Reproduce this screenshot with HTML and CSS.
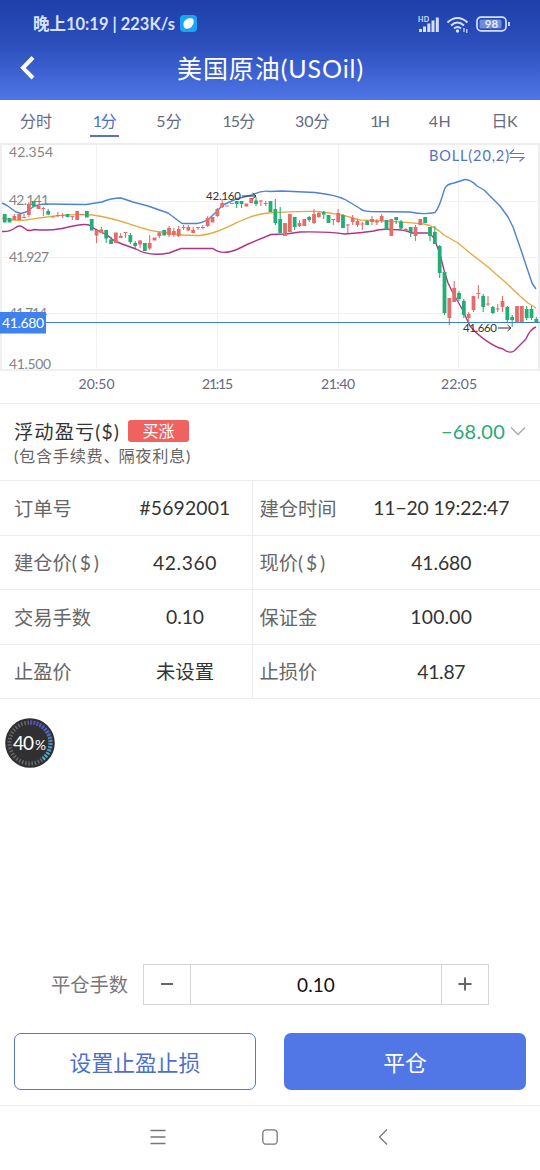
FILE: index.html
```html
<!DOCTYPE html>
<html lang="zh-CN">
<head>
<meta charset="utf-8">
<title>美国原油(USOil)</title>
<link rel="stylesheet" href="styles.css">
</head>
<body>
<div class="screen">
  <header class="header">
    <div class="status">
      <span class="status-text"><span class="fit" data-w="142">晚上10:19 | 223K/s</span></span>
      <svg class="app-badge" width="17" height="17" viewBox="0 0 17 17"><rect width="17" height="17" rx="4" fill="#18a5f4"/><path d="M3.500 9.500C3.500 5.500 7 3 11 3.300C14 3.500 14 6 13.500 8C12.500 11.500 10.500 13.700 7 13.700C4.500 13.700 3.500 12 3.500 9.500Z" fill="#fff"/></svg>
      <svg class="status-icons" width="94" height="22" viewBox="0 0 94 22">
        <text x="0" y="8.500" class="hd" textLength="11">HD</text>
        <g fill="#d6e0fa" transform="translate(0 -1)"><rect x="1" y="17" width="3" height="3"/><rect x="5" y="14.500" width="3" height="5.500"/><rect x="9.300" y="11.500" width="3" height="8.500"/><rect x="13.500" y="8.500" width="3" height="11.500"/><rect x="17.800" y="5.500" width="3" height="14.500"/></g>
        <g transform="translate(0 -1)"><g fill="none" stroke="#d6e0fa" stroke-width="2"><path d="M29.500 10.500Q39.500 1.500 49.500 10.500"/><path d="M33 13.500Q39.500 7.500 46 13.500"/><path d="M36 16.500Q39.500 13.500 43 16.500"/></g>
        <circle cx="39.500" cy="19" r="1.700" fill="#d6e0fa"/>
        <path d="M46 16v4M48.800 17v4" stroke="#d6e0fa" stroke-width="1.200"/></g>
        <g transform="translate(0 -1.500)"><rect x="59" y="5.700" width="29" height="13.600" rx="4" fill="none" stroke="#d6e0fa" stroke-width="1.700"/>
        <rect x="61.500" y="8" width="22" height="9" rx="1.500" fill="#6f8cda"/>
        <path d="M91 10.500v4" stroke="#d6e0fa" stroke-width="1.800"/>
        <text x="73.500" y="16.600" text-anchor="middle" class="battery">98</text></g>
      </svg>
    </div>
    <div class="titlebar">
      <svg class="back" width="18" height="28" viewBox="0 0 18 28"><path d="M14 3.500L4 13.800L14 24" fill="none" stroke="#fff" stroke-width="4"/></svg>
      <h1><span class="fit" data-w="187">美国原油(USOil)</span></h1>
    </div>
  </header>
  <nav class="tabs">
    <span class="tab">分时</span><span class="tab active"><span class="fit" data-w="23">1分</span></span><span class="tab"><span class="fit" data-w="25.500">5分</span></span><span class="tab"><span class="fit" data-w="32">15分</span></span><span class="tab"><span class="fit" data-w="34.500">30分</span></span><span class="tab"><span class="fit" data-w="18">1H</span></span><span class="tab"><span class="fit" data-w="22">4H</span></span><span class="tab"><span class="fit" data-w="25.500">日K</span></span>
  </nav>
  <svg class="chart" id="chart" width="540" height="260" viewBox="0 143 540 260">
    <rect x="0" y="142" width="540" height="3" fill="#ededed"/>
    <path d="M1 145V370M539 145V370M0 370H540" stroke="#efefef" stroke-width="2"/>
    <path d="M96.500 145V370M217.500 145V370M338.500 145V370M458.500 145V370M1 201.500H539M1 257.500H539M1 313.500H539" stroke="#f2f2f4"/>
    <g class="price-axis">
      <text x="9" y="157" textLength="44">42.354</text>
      <text x="9" y="205" textLength="40">42.141</text>
      <text x="9" y="262" textLength="40">41.927</text>
      <text x="9" y="318" textLength="38">41.714</text>
      <text x="9" y="368.500" textLength="42">41.500</text>
    </g>
    <path class="line orange" d="M2 218C9 220 17 221 26 220Q45 217 55 216Q75 214 93 215C125 219 143 232 162 232Q180 236 200 235.500C225 233 240 216 268 213Q295 211 318 211.500Q342 214 360 220Q395 221 424 224C434 226 439 230 444 235L458 243L470 253L488 267L504 281L520 296L528 303L536 308"/>
    <path class="line purple" d="M2 231.500Q10 232 15 228T24 228T34 229.500Q48 231 62 228.500Q84 223 89 225C99 233 106 232 113 240L122 244L136 249C146 255 158 255 169 253L181 248.500H213Q222 256 238 249L247 244.500L271 234.500L286 234L300 232Q330 231.500 345 234Q360 233 374 231Q380 228.500 392 229.500Q405 229.500 412 233L429 233L434 238L440 254L444 270L448 283L453 293Q463 309 470 326C479 337 494 347 503 349Q509 354 514 351L526 339Q530 329 536 327"/>
    <path class="line blue" d="M2 203L7 205.500L16 212L21 213.500L26 212L33 207Q38 204 47 204L86 204.500L102 202Q111 198 121 198L133 202L148 206L168 213L182 223.500H197Q207 222 213 215L223 205L236 199L252 195Q262 190 270 191.500L282 191L315 192.500Q337 195 346 200L360 208.500Q362 211 370 211.500L410 212Q424 215 435 212.500C440 207 442 196 445 188Q447 184 454 183L465 179.500Q470 179 477 186L484 190L500 206L508 217L513 227L521 250L532 283L536 289"/>
    <g id="candles"></g>
    <path d="M0 322.500H540" stroke="#3c80c8" stroke-width="1.200"/>
    <rect x="0" y="312" width="46" height="21.500" fill="#3e82f0"/>
    <text x="2" y="328" class="tag" textLength="42">41.680</text>
    <text x="206" y="200" class="mark" textLength="35">42.160</text>
    <text x="463" y="332" class="mark" textLength="34">41.660</text>
    <path d="M242 196H256M252.500 193L256 196L252.500 199M498 328H511M507.500 325L511 328L507.500 331" fill="none" stroke="#333"/>
    <text x="429" y="161" class="boll" textLength="80">BOLL(20,2)</text>
    <path d="M514 149.500L510 153.500H524M510 157.500H524L519.500 161.500" fill="none" stroke="#5a78cb" stroke-width="1.100"/>
    <g class="time-axis" text-anchor="middle"><text x="96.500" y="389" textLength="36">20:50</text><text x="217.500" y="389" textLength="31">21:15</text><text x="338" y="389" textLength="34">21:40</text><text x="459" y="389" textLength="36">22:05</text></g>
  </svg>
  <section class="pnl">
    <div>
      <div class="pnl-title"><span class="fit" data-w="106">浮动盈亏($)</span><span class="chip">买涨</span></div>
      <div class="pnl-note"><span class="fit" data-w="177">(包含手续费<span class="comma">、</span>隔夜利息)</span></div>
    </div>
    <div class="pnl-value"><span class="fit" data-w="64">−68.00</span><svg width="16" height="10" viewBox="0 0 16 10"><path d="M1 1.500L8 8.500L15 1.500" fill="none" stroke="#aaa" stroke-width="1.500"/></svg></div>
  </section>
  <section class="details">
    <div class="cell"><label>订单号</label><b><span class="fit" data-w="91">#5692001</span></b></div><div class="cell"><label>建仓时间</label><b><span class="fit" data-w="136">11−20 19:22:47</span></b></div>
    <div class="cell"><label>建仓价<span class="fit" data-w="30">($)</span></label><b><span class="fit" data-w="64">42.360</span></b></div><div class="cell"><label>现价<span class="fit" data-w="30">($)</span></label><b><span class="fit" data-w="60">41.680</span></b></div>
    <div class="cell"><label>交易手数</label><b><span class="fit" data-w="38">0.10</span></b></div><div class="cell"><label>保证金</label><b><span class="fit" data-w="62">100.00</span></b></div>
    <div class="cell"><label>止盈价</label><b>未设置</b></div><div class="cell"><label>止损价</label><b><span class="fit" data-w="48">41.87</span></b></div>
  </section>
  <div class="gauge-wrap">
    <svg width="50" height="50" viewBox="0 0 50 50">
      <defs><linearGradient id="arc" x1="0" y1="0" x2="0" y2="1"><stop offset="0" stop-color="#5147c4"/><stop offset=".5" stop-color="#4389cf"/><stop offset="1" stop-color="#3bbbd6"/></linearGradient></defs>
      <circle cx="25" cy="25" r="24.800" fill="#303032"/>
      <circle cx="25" cy="25" r="20.500" fill="none" stroke="#68686a" stroke-width="4" stroke-dasharray="1.500 1.720"/>
      <path d="M25 4.500A20.500 20.500 0 0 1 37.500 41.250" fill="none" stroke="url(#arc)" stroke-width="4" stroke-dasharray="1.900 1.320"/>
      <text x="8" y="31.500" class="gauge-num" textLength="21">40</text><text x="30" y="31.500" class="gauge-pct" textLength="11" lengthAdjust="spacingAndGlyphs">%</text>
    </svg>
  </div>
  <section class="lots">
    <span class="lots-label">平仓手数</span>
    <div class="stepper">
      <span class="step"><svg width="14" height="14"><path d="M1 7H13" stroke="#666" stroke-width="2"/></svg></span>
      <span class="qty"><span class="fit" data-w="38">0.10</span></span>
      <span class="step"><svg width="14" height="14"><path d="M.5 7H13.500M7 .5V13.500" stroke="#666" stroke-width="2"/></svg></span>
    </div>
  </section>
  <section class="actions"><button class="btn outline">设置止盈止损</button><button class="btn solid">平仓</button></section>
  <footer class="sysnav">
    <svg width="16" height="16" viewBox="0 0 16 16"><path d="M.5 1.500H15.500M.5 8H15.500M.5 14.500H15.500"/></svg>
    <svg width="16" height="16" viewBox="0 0 16 16"><rect x=".8" y=".8" width="14.400" height="14.400" rx="3.500"/></svg>
    <svg width="16" height="16" viewBox="0 0 16 16"><path d="M13 .5L5.500 8L13 15.500"/></svg>
  </footer>
</div>
<script src="chart.js"></script>
</body>
</html>
```
FILE: styles.css
```css
* { box-sizing: border-box; }
body { margin: 0; background: #fff; font-family: Lato, "Noto Sans CJK SC", sans-serif; color: #333; }
.screen { width: 540px; height: 1170px; display: flex; flex-direction: column; overflow: hidden; }
.fit { display: inline-block; white-space: nowrap; }
svg { display: block; flex: none; }

.header { height: 100px; flex: none; background: linear-gradient(#1e3fa9, #2c4fbd 45%, #4f75e6); color: #fff; }
.status { height: 47px; padding: 0 28px 0 33px; display: flex; align-items: center; }
.status-text { font-size: 16.5px; font-weight: 700; color: #d9e2fa; line-height: 20px; }
.app-badge { margin-left: 5px; }
.status-icons { margin-left: auto; }
.hd { font-size: 7px; font-weight: 700; fill: #d6e0fa; }
.battery { font-size: 11.5px; font-weight: 700; fill: #e4ebfc; }
.titlebar { height: 42px; display: flex; align-items: center; padding: 0 19px; }
.titlebar h1 { margin: 0 17px 0 0; flex: 1; text-align: center; font-size: 25px; font-weight: 400; line-height: 36px; }

.tabs { height: 43px; flex: none; display: flex; justify-content: space-between; padding: 0 23px 0 20px; color: #666a80; font-size: 16px; line-height: 42px; }
.tab { height: 37px; display: flex; justify-content: center; }
.tab.active { color: #4a6fd0; border-bottom: 2px solid #5374c8; margin: 0 -3px; padding: 0 3px; }

.chart { font-family: Lato, sans-serif; }
.price-axis { font-size: 14px; fill: #858585; }
.time-axis { font-size: 14px; fill: #66687c; }
.tag { font-size: 14px; fill: #fff; }
.mark { font-size: 11.5px; fill: #333; }
.boll { font-size: 14.5px; fill: #5472c4; }
.line { fill: none; stroke-width: 1.4; stroke-linejoin: round; }
.orange { stroke: #e5ab42; }
.purple { stroke: #b13386; }
.blue { stroke: #4c83d4; }

.pnl { height: 77px; flex: none; border-top: 1px solid #ececec; padding: 11px 14px 0; display: flex; justify-content: space-between; }
.pnl-title { display: flex; align-items: center; gap: 8px; height: 31px; font-size: 19.3px; }
.chip { width: 61px; height: 22px; border-radius: 3px; background: #f0625f; color: #fff; font-size: 16px; line-height: 21px; text-align: center; }
.pnl-note { font-size: 16.2px; color: #666; line-height: 19px; }
.comma { display: inline-block; margin-right: -2px; }
.pnl-value { display: flex; align-items: center; gap: 5px; height: 31px; font-size: 20px; color: #2aa878; }

.details { flex: none; display: grid; grid-template-columns: 253px 287px; grid-auto-rows: 54.5px; border-bottom: 1px solid #ececec; }
.cell { display: flex; align-items: center; border-top: 1px solid #ececec; padding: 0 0 0 14px; font-size: 19.3px; }
.cell:nth-child(odd) { border-right: 1px solid #ececec; }
.cell:nth-child(even) { padding-left: 6.5px; }
.cell label { width: 104px; color: #666; }
.cell b { flex: 1; font-weight: 400; text-align: center; }
.cell:nth-child(even) b { padding-right: 21px; }

.gauge-wrap { flex: none; height: 264px; padding: 19px 0 0 5px; }
.gauge-num { font-size: 19px; fill: #fff; }
.gauge-pct { font-size: 13px; fill: #fff; }

.lots { flex: none; display: flex; align-items: center; padding-left: 51px; height: 42px; }
.lots-label { width: 92px; font-size: 19.3px; line-height: 28px; padding-top: 1px; color: #777; }
.stepper { display: flex; width: 346px; height: 41px; border: 1px solid #d6d6d6; }
.step { width: 46px; display: flex; align-items: center; justify-content: center; }
.qty { flex: 1; border: solid #d6d6d6; border-width: 0 1px; text-align: center; font-size: 19px; line-height: 40px; color: #111; }
.actions { flex: none; display: flex; gap: 28px; padding: 28px 14px 15px; }
.btn { width: 242px; height: 57px; border-radius: 7px; font-family: inherit; font-size: 21.8px; padding: 0 0 1px; }
.outline { background: #fff; border: 1.5px solid #5577d0; color: #4c70ca; }
.solid { background: #5177e7; border: 0; color: #fff; }
.sysnav { flex: 1; border-top: 1px solid #ececec; display: flex; justify-content: center; gap: 96px; padding-top: 23px; }
.sysnav svg { fill: none; stroke: #777; stroke-width: 1.3; }
```
FILE: chart.js
```js
// Each candle: colour, body top, body bottom, optional wick top, wick bottom.
const data = `G214-222.5,G218-222.5,R216-220-214-220,R214-220,R217-218-214-218,R204-215-202-217,G201-206.5,R206-209-204-209,R208-209-207-216,G211-214.5-209-215,
R216.5-217.5,R215-216-212-217,R215-216-213-218,G214-217,R216-217-216-220,R211-220,R214-215,G211-217.5,G219-230.5,R230-235.5-230-243,
R229.5-233-227-233,G230-238.5-230-243,G239.5-244-237-244,R232.5-243,R236-238-233-238,R232-233-232-238,G235-242-233-244,G243-246-241-248,R240.5-244.5-240-248,G243-251,
R243-248.5-235-250,R237.5-240.5,R232.5-236-232-238,G230-235.5,R228-235-226-237,R231-235-228-237,R229-236-226-237,R227-228-225-230,R227-230.5-225-231,R230-233-227-233,
R227-228-227-230,R227-228-225-229,R218-226-216-227,R217-222.5,R209-216-208-217,R203-207-199-208,R205.5-206.5,R203-204,G201-204-201-208,G201-204-201-208,
R203.5-206.5,R198-203,G200.5-204-197-206,R200.5-201.5-200-206,R203-204-201-206,G201-212,G209-223-199-225,G219-233-207-233,R223-236,R214-232,
G217-227-217-230,R223-226-220-227,R219-226,G217-220-216-222,R214-223-209-224,R213-217-212-218,G212-214.5-211-219,G215-223,R219-220-219-225,R213-222-209-223,
G215-228-214-228,R224.5-225.5-224-233,R218-222-215-225,R221-225-219-227,R223.5-224.5-222-230,G221-225-220-225,R219-222-216-225,R221-222.5-219-225,R216-221-214-223,G220-230,
R219-236,G217-220-217-224,G221.5-228.5-220-230,R229-230.5-228-231,G227-232-227-237,R227-236-225-241,R219-225,G217-223,G227-236-227-241,G232-244-226-244,
G246-273-245-278,G272-313-272-315,R298-318-298-325,R288-302-281-302,G293-299-291-301,G301-315-299-318,R314-318-312-323,R296-310-296-312,R293-294-285-299,G296-307-294-312,
R303.5-304.5-296-306,G307-313-306-314,R308.5-309.5-304-312,R301-307-296-312,G307-320-306-322,G317-320-315-327,R306-322,R306-322,G309-318-306-320,G309-318-306-320,G319-322-317-322`;
const NS = 'http://www.w3.org/2000/svg';
const layer = document.getElementById('candles');
const rect = (x, y, w, h, fill) => {
  const r = document.createElementNS(NS, 'rect');
  Object.entries({ x, y, width: w, height: h, fill }).forEach(([k, v]) => r.setAttribute(k, v));
  layer.appendChild(r);
};
data.split(',').forEach((item, i) => {
  const s = item.trim();
  const [top, bottom, high, low] = s.slice(1).split('-').map(Number);
  const color = s[0] === 'G' ? '#22ae76' : '#e56d69';
  const x = 4.7 + i * 4.833;
  rect(x - 1.9, top, 3.8, bottom - top, color);
  if (high) rect(x - 0.55, high, 1.1, low - high, color);
});
// Space letters so that each line fills its intended width.
document.querySelectorAll('.fit').forEach(el => {
  const n = [...el.textContent].length;
  const gap = (Number(el.dataset.w) - el.getBoundingClientRect().width) / n;
  el.style.letterSpacing = gap.toFixed(3) + 'px';
});
```
